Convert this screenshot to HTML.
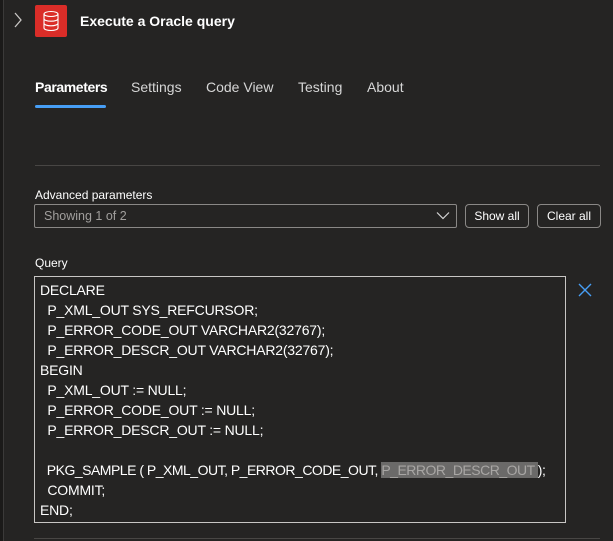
<!DOCTYPE html>
<html><head><meta charset="utf-8"><style>
*{margin:0;padding:0;box-sizing:border-box}
body{width:613px;height:541px;background:#252423;font-family:"Liberation Sans",sans-serif;color:#fff;position:relative;overflow:hidden}
.a{position:absolute}
.strip{left:0;top:0;width:4px;height:541px;background:#1b1a19;border-right:1px solid #3b3a39}
.tab{top:79px;font-size:14px;color:#d6d6d6}
.code{left:40px;top:280px;font-size:14px;line-height:20px;color:#fff;white-space:pre;font-family:"Liberation Sans",sans-serif;letter-spacing:-0.2px}
.btn{top:204px;height:24px;border:1px solid #8a8886;border-radius:4px;font-size:12px;line-height:22px;text-align:center;color:#fff}
</style></head><body>
<div class="a strip"></div>
<svg class="a" style="left:13px;top:12px" width="10" height="16" viewBox="0 0 10 16"><path d="M2 1l6 7-6 7" fill="none" stroke="#c8c6c4" stroke-width="1.3"/></svg>
<div class="a" style="left:35px;top:5px;width:32px;height:32px;background:#da2d28;border-radius:2px"></div>
<svg class="a" style="left:42px;top:10px" width="18" height="22" viewBox="0 0 18 22" fill="none" stroke="#fff" stroke-width="1.1"><ellipse cx="9" cy="4" rx="7" ry="2.5"/><path d="M2 4v14c0 1.4 3 2.5 7 2.5s7-1.1 7-2.5V4M2 8.7c0 1.4 3 2.5 7 2.5s7-1.1 7-2.5M2 13.3c0 1.4 3 2.5 7 2.5s7-1.1 7-2.5"/></svg>
<div class="a" style="left:80px;top:13px;font-size:14px;font-weight:bold">Execute a Oracle query</div>
<div class="a tab" style="left:35px;color:#fff;font-weight:bold;letter-spacing:-0.4px">Parameters</div>
<div class="a tab" style="left:131px">Settings</div>
<div class="a tab" style="left:206px">Code View</div>
<div class="a tab" style="left:298px">Testing</div>
<div class="a tab" style="left:367px">About</div>
<div class="a" style="left:35px;top:105px;width:71px;height:3px;background:#479ef5;border-radius:2px"></div>
<div class="a" style="left:35px;top:165px;width:565px;height:1px;background:#484644"></div>
<div class="a" style="left:35px;top:188px;font-size:12px">Advanced parameters</div>
<div class="a" style="left:34px;top:204px;width:423px;height:24px;border:1px solid #8a8886;border-radius:2px;font-size:12.5px;line-height:22px;padding-left:9px;color:#a19f9d">Showing 1 of 2</div>
<svg class="a" style="left:436px;top:211px" width="14" height="9" viewBox="0 0 14 9"><path d="M1 1.5l6 6 6-6" fill="none" stroke="#d6d6d6" stroke-width="1.2"/></svg>
<div class="a btn" style="left:465px;width:64px">Show all</div>
<div class="a btn" style="left:537px;width:64px">Clear all</div>
<div class="a" style="left:35px;top:256px;font-size:12px">Query</div>
<div class="a" style="left:34px;top:276px;width:532px;height:247px;border:1px solid #c8c6c4"></div>
<div class="a code">DECLARE
  P_XML_OUT SYS_REFCURSOR;
  P_ERROR_CODE_OUT VARCHAR2(32767);
  P_ERROR_DESCR_OUT VARCHAR2(32767);
BEGIN
  P_XML_OUT := NULL;
  P_ERROR_CODE_OUT := NULL;
  P_ERROR_DESCR_OUT := NULL;

<span style="letter-spacing:-0.5px">  PKG_SAMPLE ( P_XML_OUT, P_ERROR_CODE_OUT, <span style="background:#6b6a69;color:#a8a6a4">P_ERROR_DESCR_OUT </span>);</span>
  COMMIT;
END;</div>
<svg class="a" style="left:578px;top:283px" width="14" height="14" viewBox="0 0 14 14"><path d="M1 1l12 12M13 1L1 13" stroke="#479ef5" stroke-width="1.4"/></svg>
<div class="a" style="left:34px;top:538px;width:566px;height:1px;background:#484644"></div>
</body></html>
